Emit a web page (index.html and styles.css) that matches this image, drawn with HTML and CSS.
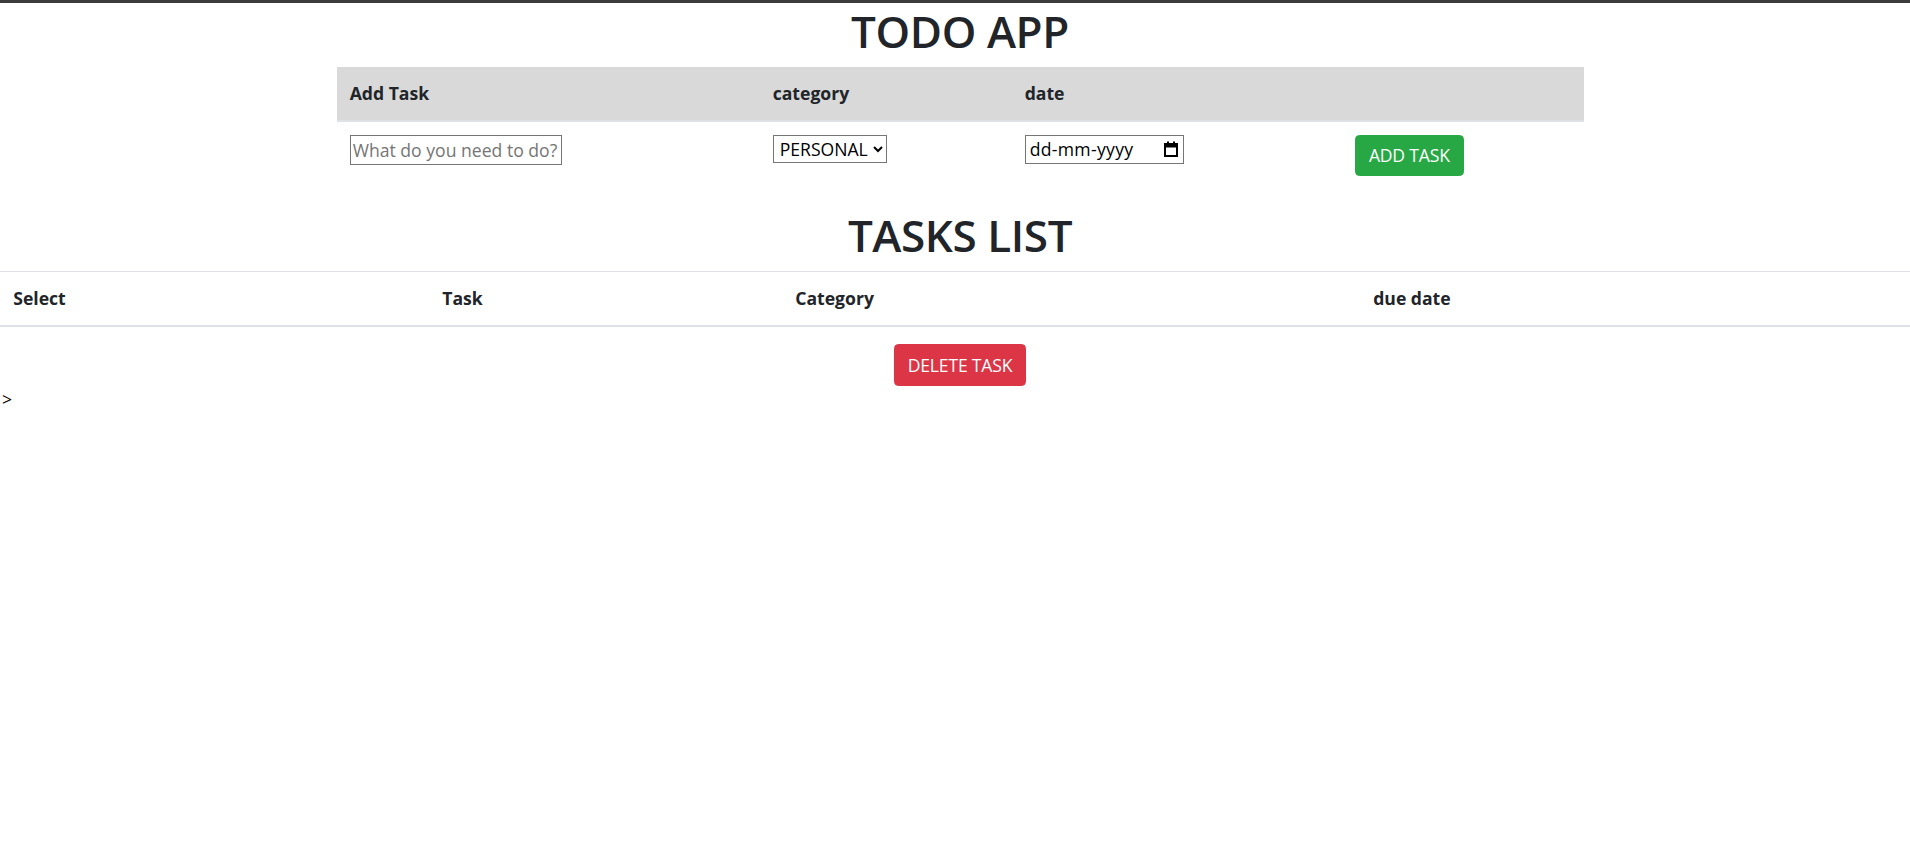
FILE: index.html
```html
<!DOCTYPE html>
<html lang="en">
<head>
<meta charset="utf-8">
<title>TODO APP</title>
<link rel="stylesheet" href="styles.css">
</head>
<body>
<div class="topbar"></div>
<h1 class="title">TODO APP</h1>
<table class="add-table">
  <thead>
    <tr>
      <th class="c-add">Add Task</th>
      <th class="c-cat">category</th>
      <th class="c-date">date</th>
      <th class="c-btn"></th>
    </tr>
  </thead>
  <tbody>
    <tr>
      <td><input class="task-input" type="text" placeholder="What do you need to do?"></td>
      <td>
        <select class="cat-select">
          <option>PERSONAL</option>
          <option>WORK</option>
          <option>SHOPPING</option>
        </select>
      </td>
      <td>
        <label class="date-field">
          <input class="date-text" type="text" placeholder="dd-mm-yyyy">
          <svg class="cal-icon" width="14" height="16" viewBox="0 0 14 16" aria-hidden="true">
            <rect x="1" y="3" width="12" height="12" fill="none" stroke="#000" stroke-width="2"/>
            <rect x="1" y="3" width="12" height="3.5" fill="#000"/>
            <rect x="3" y="0.5" width="2" height="3" fill="#000"/>
            <rect x="9" y="0.5" width="2" height="3" fill="#000"/>
          </svg>
        </label>
      </td>
      <td><button class="btn btn-success" type="button">ADD TASK</button></td>
    </tr>
  </tbody>
</table>
<h1 class="title">TASKS LIST</h1>
<table class="list-table">
  <thead>
    <tr>
      <th class="l-select">Select</th>
      <th class="l-task">Task</th>
      <th class="l-cat">Category</th>
      <th class="l-due">due date</th>
    </tr>
  </thead>
  <tbody></tbody>
</table>
<div class="actions">
  <button class="btn btn-danger" type="button">DELETE TASK</button>
</div>
<div class="stray">&gt;</div>
</body>
</html>
```

FILE: styles.css
```css
html {
  overflow: hidden;
}

html, body {
  margin: 0;
  padding: 0;
  background: #fff;
}

body {
  width: 1920px;
  font-family: "Open Sans", "Noto Sans", sans-serif;
  font-size: 17.6px;
  line-height: 1.5;
  color: #212529;
}

.topbar {
  height: 3px;
  background: #3b3b3b;
}

.title {
  margin: 0 0 9px;
  padding-top: 2px;
  font-size: 44px;
  font-weight: 600;
  line-height: 1.2;
  text-align: center;
  letter-spacing: -0.4px;
}

table {
  border-collapse: collapse;
  table-layout: fixed;
  margin-bottom: 17.6px;
}

th, td {
  padding: 13.2px;
  text-align: left;
  vertical-align: top;
  box-sizing: border-box;
}

th {
  font-weight: 700;
  vertical-align: bottom;
}

.add-table {
  width: 1247px;
  margin-left: auto;
  margin-right: auto;
}

.add-table thead th {
  background: #d9d9d9;
  border-bottom: 2px solid #dee2e6;
}

.c-add { width: 423px; }
.c-cat { width: 252px; }
.c-date { width: 330px; }
.c-btn { width: 242px; }

.list-table {
  width: 100%;
}

.list-table thead th {
  border-top: 1px solid #dee2e6;
  border-bottom: 2px solid #dee2e6;
}

.l-select { width: 429px; }
.l-task { width: 353px; }
.l-cat { width: 578px; }

input, select, button {
  font-family: inherit;
  font-size: 17.6px;
  line-height: 1.5;
  margin: 0;
}

.task-input {
  box-sizing: border-box;
  width: 212px;
  height: 30px;
  padding: 1px 2px;
  border: 1px solid #767676;
  border-radius: 0;
  color: #212529;
  vertical-align: top;
}

.task-input::placeholder {
  color: #757575;
}

.cat-select {
  box-sizing: border-box;
  width: 114px;
  height: 28px;
  padding: 0 0 0 2px;
  border: 1px solid #767676;
  border-radius: 0;
  background: #fff;
  color: #000;
  line-height: 1;
  vertical-align: top;
}

.date-field {
  box-sizing: border-box;
  display: inline-flex;
  align-items: center;
  width: 159px;
  height: 29px;
  padding: 0 5px 0 4px;
  border: 1px solid #767676;
  background: #fff;
  vertical-align: top;
}

.date-text {
  flex: 1;
  min-width: 0;
  padding: 0;
  border: 0;
  outline: none;
  background: transparent;
  color: #000;
  letter-spacing: 0.3px;
}

.date-text::placeholder {
  color: #000;
  opacity: 1;
}

.cal-icon {
  flex: none;
  display: block;
}

.btn {
  display: inline-block;
  padding: 6.6px 13.2px;
  border: 1.1px solid transparent;
  border-radius: 4.4px;
  font-weight: 400;
  color: #fff;
  cursor: pointer;
  vertical-align: top;
  letter-spacing: -0.2px;
}

.btn-success {
  background: #28a745;
  border-color: #28a745;
}

.btn-danger {
  background: #dc3545;
  border-color: #dc3545;
}

.actions {
  display: flex;
  justify-content: center;
}

.stray {
  padding-left: 2px;
  line-height: 26.4px;
  color: #000;
}
```
